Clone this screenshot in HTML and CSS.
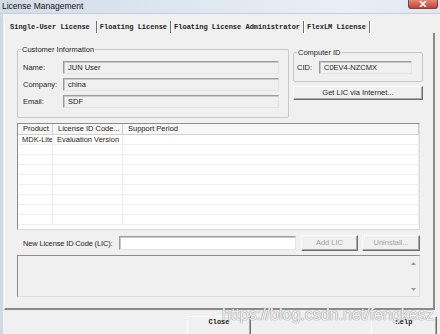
FILE: index.html
```html
<!DOCTYPE html>
<html lang="en">
<head>
    <meta charset="UTF-8">
    <title>License Management</title>
    <link rel="stylesheet" href="styles.css">
</head>
<body>
    <div class="window">
        <div class="titlebar">
            <span class="title">License Management</span>
            <span class="close-x">
                <svg width="8" height="6" viewBox="0 0 8 6"><path d="M1 0 L7 6 M7 0 L1 6" stroke="#fff" stroke-width="1.6"/></svg>
            </span>
        </div>
        <div class="client">
            <div class="tabs">
                <div class="tab tab-active">Single-User License</div>
                <div class="tab">Floating License</div>
                <div class="tab">Floating License Administrator</div>
                <div class="tab">FlexLM License</div>
            </div>
            <div class="panel">
                <div class="top-row">
                    <fieldset class="group customer">
                        <legend>Customer Information</legend>
                        <div class="field-row">
                            <label>Name:</label>
                            <div class="edit">JUN User</div>
                        </div>
                        <div class="field-row">
                            <label>Company:</label>
                            <div class="edit">china</div>
                        </div>
                        <div class="field-row">
                            <label>Email:</label>
                            <div class="edit">SDF</div>
                        </div>
                    </fieldset>
                    <div class="right-col">
                        <fieldset class="group computer">
                            <legend>Computer ID</legend>
                            <div class="field-row">
                                <label class="cid-label">CID:</label>
                                <div class="edit">C0EV4-NZCMX</div>
                            </div>
                        </fieldset>
                        <div class="btn get-lic">Get LIC via Internet...</div>
                    </div>
                </div>

                <div class="listview">
                    <div class="lv-header">
                        <div class="cell c1">Product</div>
                        <div class="cell c2">License ID Code...</div>
                        <div class="cell c3">Support Period</div>
                    </div>
                    <div class="lv-row">
                        <div class="cell c1">MDK-Lite</div>
                        <div class="cell c2">Evaluation Version</div>
                        <div class="cell c3"></div>
                    </div>
                    <div class="lv-row"><div class="cell c1"></div><div class="cell c2"></div><div class="cell c3"></div></div>
                    <div class="lv-row"><div class="cell c1"></div><div class="cell c2"></div><div class="cell c3"></div></div>
                    <div class="lv-row"><div class="cell c1"></div><div class="cell c2"></div><div class="cell c3"></div></div>
                    <div class="lv-row"><div class="cell c1"></div><div class="cell c2"></div><div class="cell c3"></div></div>
                    <div class="lv-row"><div class="cell c1"></div><div class="cell c2"></div><div class="cell c3"></div></div>
                    <div class="lv-row"><div class="cell c1"></div><div class="cell c2"></div><div class="cell c3"></div></div>
                    <div class="lv-row"><div class="cell c1"></div><div class="cell c2"></div><div class="cell c3"></div></div>
                    <div class="lv-row"><div class="cell c1"></div><div class="cell c2"></div><div class="cell c3"></div></div>
                </div>

                <div class="lic-row">
                    <label class="lic-label">New License ID Code (LIC):</label>
                    <div class="edit lic-input"></div>
                    <div class="btn disabled add-lic">Add LIC</div>
                    <div class="btn disabled uninstall">Uninstall...</div>
                </div>

                <div class="msg-box">
                    <div class="scroll">
                        <svg width="5" height="3" viewBox="0 0 5 3"><path d="M0 3 L2.5 0 L5 3 Z" fill="#9a9a9a"/></svg>
                        <svg width="5" height="3" viewBox="0 0 5 3"><path d="M0 0 L2.5 3 L5 0 Z" fill="#9a9a9a"/></svg>
                    </div>
                </div>
            </div>

            <div class="footer">
                <div class="btn mono-btn close-btn">Close</div>
                <div class="btn mono-btn help-btn">Help</div>
            </div>
        </div>
        <div class="watermark">https://blog.csdn.net/fengkesz</div>
    </div>
</body>
</html>
```

FILE: styles.css
```css
body {
    margin: 0;
    padding: 0;
    font-family: "Liberation Sans", Arial, sans-serif;
    font-size: 7.5px;
    color: #1e1e1e;
}

.window {
    position: relative;
    width: 440px;
    height: 334px;
    overflow: hidden;
    background: #f0f0f0;
}

/* title bar */
.titlebar {
    height: 14px;
    display: flex;
    justify-content: space-between;
    align-items: flex-start;
    background: linear-gradient(to right, #d3dde8, #dfe7f0 45%, #e9eff6 80%, #dde6ef);
    border-bottom: 1px solid #c4cfdb;
    box-sizing: border-box;
}

.title {
    font-size: 8.5px;
    line-height: 13px;
    padding-left: 2px;
    color: #111;
}

.close-x {
    width: 30px;
    height: 9px;
    margin-right: 2px;
    display: flex;
    align-items: center;
    justify-content: center;
    background: linear-gradient(#e0897d, #c4412f);
    border: 1px solid #8f3b31;
    border-top: none;
    border-radius: 0 0 3px 3px;
    box-sizing: border-box;
}

.client {
    padding: 7px 0 0 1px;
    border-left: 3px solid #d0d9e3;
}

/* tabs */
.tabs {
    display: flex;
    height: 12px;
}

.tab {
    font-family: "Liberation Mono", monospace;
    font-weight: bold;
    font-size: 7px;
    line-height: 12px;
    padding: 0 3px;
    border-right: 1px solid #707070;
    box-shadow: 1px 0 0 #ffffff;
    color: #222;
}

.tab-active {
    padding: 0 6px 0 5px;
    border-left: 1px solid #ffffff;
}

.panel {
    width: 431px;
    box-sizing: border-box;
    padding: 12px 13px 11px 12px;
    border-left: 1px solid #ffffff;
    border-right: 2px solid #8a8a8a;
    border-bottom: 2px solid #8a8a8a;
}

.top-row {
    display: flex;
    gap: 4px;
    align-items: flex-start;
    width: 420px;
}

/* group boxes */
.group {
    margin: 0;
    border: 1px solid #c8c8c8;
    border-radius: 2px;
    box-sizing: border-box;
}

.group legend {
    padding: 0 1px;
    margin-left: 0;
    line-height: 9px;
    font-size: 7.5px;
}

.customer legend {
    margin-left: -2px;
}

.customer {
    width: 272px;
    padding: 7px 9px 9px 5px;
}

.field-row {
    display: flex;
    align-items: center;
    height: 13px;
    margin-bottom: 4px;
}

.field-row:last-child {
    margin-bottom: 0;
}

.field-row label {
    width: 40px;
    flex-shrink: 0;
}

.edit {
    flex: 1;
    height: 13px;
    line-height: 11px;
    box-sizing: border-box;
    padding-left: 4px;
    border: 1px solid;
    border-color: #9c9c9c #e4e4e4 #e4e4e4 #9c9c9c;
    box-shadow: inset 1px 1px 0 #c9c9c9;
    background: #f0f0f0;
}

.right-col {
    width: 130px;
    display: flex;
    flex-direction: column;
    gap: 4px;
}

.computer {
    margin-top: 3px;
    padding: 4px 10px 7px 3px;
}

.field-row .cid-label {
    width: 22px;
}

/* buttons */
.btn {
    box-sizing: border-box;
    background: #f0f0f0;
    border: 1px solid;
    border-color: #ffffff #6e6e6e #6e6e6e #ffffff;
    box-shadow: inset -1px -1px 0 #a8a8a8;
    text-align: center;
}

.get-lic {
    height: 14px;
    line-height: 12px;
}

.disabled {
    color: #a3a3a3;
}

/* list view */
.listview {
    margin-top: 5px;
    width: 403px;
    height: 107px;
    box-sizing: border-box;
    background: #ffffff;
    border: 1px solid;
    border-color: #8d8d8d #dcdcdc #dcdcdc #8d8d8d;
    overflow: hidden;
}

.lv-header,
.lv-row {
    display: flex;
}

.lv-header {
    height: 11px;
    background: #f7f7f7;
    border-bottom: 1px solid #d0d0d0;
    box-sizing: border-box;
    line-height: 10px;
}

.lv-row {
    height: 10px;
    line-height: 10px;
    border-bottom: 1px solid #efefef;
    box-sizing: border-box;
}

.cell {
    box-sizing: border-box;
    padding-left: 4px;
    white-space: nowrap;
    overflow: hidden;
    border-right: 1px solid #ececec;
}

.lv-header .cell {
    padding-left: 5px;
    border-right-color: #cfcfcf;
}

.c1 {
    width: 35px;
}

.c2 {
    width: 70px;
}

.c3 {
    flex: 1;
}

/* new LIC row */
.lic-row {
    margin-top: 5px;
    display: flex;
    align-items: center;
    height: 16px;
}

.lic-label {
    width: 102px;
    flex-shrink: 0;
    padding-left: 6px;
    box-sizing: border-box;
    white-space: nowrap;
    letter-spacing: -0.15px;
}

.lic-input {
    flex: none;
    width: 177px;
    height: 14px;
    background: #ffffff;
    margin-right: 5px;
}

.add-lic,
.uninstall {
    height: 16px;
    line-height: 14px;
}

.add-lic {
    width: 57px;
    margin-right: 4px;
}

.uninstall {
    width: 58px;
}

.msg-box {
    margin-top: 4px;
    width: 403px;
    height: 42px;
    box-sizing: border-box;
    border: 1px solid;
    border-color: #8d8d8d #dcdcdc #dcdcdc #8d8d8d;
    display: flex;
    justify-content: flex-end;
}

.scroll {
    width: 11px;
    display: flex;
    flex-direction: column;
    justify-content: space-between;
    align-items: center;
    padding: 6px 0 5px;
}

.scroll svg {
    display: block;
}

/* footer */
.footer {
    display: flex;
    padding-top: 6px;
}

.mono-btn {
    font-family: "Liberation Mono", monospace;
    font-weight: bold;
    font-size: 7px;
    height: 24px;
    line-height: 9px;
    padding-top: 1px;
    color: #222;
}

.close-btn {
    width: 64px;
    margin-left: 183px;
}

.help-btn {
    width: 66px;
    margin-left: 120px;
}

.watermark {
    position: absolute;
    left: 222px;
    top: 307px;
    font-size: 16px;
    line-height: 16px;
    color: rgba(255, 255, 255, 0.9);
    text-shadow: 0 0 1px #8a8a8a, 0 0 1px #8a8a8a;
    white-space: nowrap;
}
```
